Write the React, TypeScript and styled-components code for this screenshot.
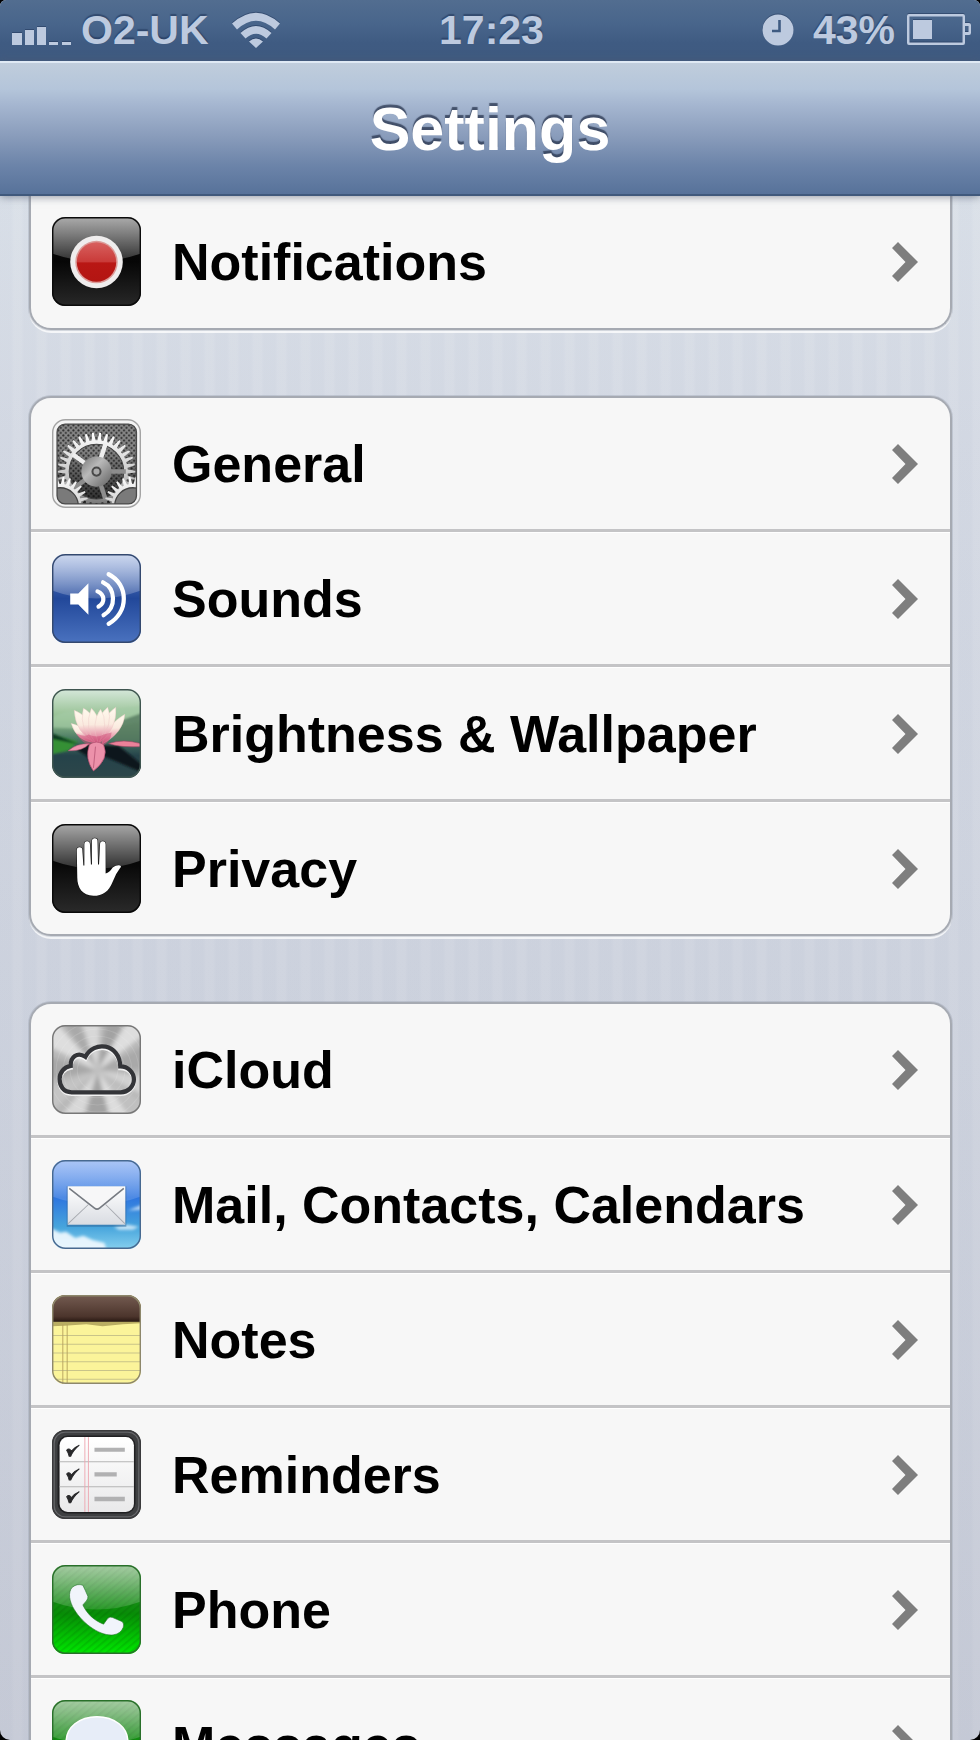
import React from "react";
import styled, { createGlobalStyle, css } from "styled-components";

const GlobalStyle = createGlobalStyle`
  *, *::before, *::after { box-sizing: border-box; }
  html, body { margin: 0; background: #000; }
  body { font-family: "Liberation Sans", Arial, sans-serif; font-weight: 700; }
`;

const Screen = styled.div`
  display: flex;
  flex-direction: column;
  height: 100vh;
  overflow: hidden;
  border-radius: 6px 6px 10px 10px;
  background:
    repeating-linear-gradient(90deg, rgba(120, 140, 175, 0.03) 0 11px, rgba(255, 255, 255, 0.02) 14px 21px, rgba(120, 140, 175, 0.03) 24px),
    linear-gradient(#dbe1e9 11%, #d5dae4 25%, #cfd4df 55%, #c7cbd7);
`;

const StatusBar = styled.header`
  display: grid;
  grid-template-columns: 1fr auto 1fr;
  align-items: center;
  flex: none;
  height: 61px;
  padding: 0 9px 2px 12px;
  color: #bdcadf;
  font-size: 41px;
  line-height: 46px;
  text-shadow: 0 -2px 1px rgba(30, 50, 85, 0.55);
  background: linear-gradient(#526d90, #48658b 40%, #3f5b82 70%, #3f5a80);
`;

const StatusSide = styled.div<{ $end?: boolean }>`
  display: flex;
  align-items: center;
  gap: ${(p) => (p.$end ? "12px" : "23px")};
  justify-content: ${(p) => (p.$end ? "flex-end" : "flex-start")};
`;

const Carrier = styled.span`
  display: flex;
  align-items: center;
  gap: 9px;
`;

const Charge = styled.span`
  display: flex;
  align-items: center;
  gap: 19px;
`;

const Glyph = styled.svg`
  display: block;
  flex: none;
  fill: #bdcadf;
  filter: drop-shadow(0 -1px 0 rgba(30, 50, 85, 0.5));
`;

const NavBar = styled.div`
  position: relative;
  z-index: 1;
  display: flex;
  align-items: center;
  justify-content: center;
  flex: none;
  height: 135px;
  border-top: 2px solid #dfe9f4;
  border-bottom: 2px solid #40597c;
  background: linear-gradient(#c0cddc, #b4c5da 20%, #a5b6d0 32%, #899cbb 56%, #6c84a9 78%, #57729a);
  box-shadow: 0 1px 8px rgba(80, 90, 110, 0.6);
`;

const Title = styled.h1`
  margin: 0;
  color: #fff;
  font-size: 61px;
  line-height: 68px;
  text-shadow: 0 -3px 1px rgba(45, 58, 82, 0.8);
`;

const List = styled.main`
  display: flex;
  flex: 1;
  flex-direction: column;
  gap: 66px;
  min-height: 0;
  overflow-y: auto;
  scrollbar-width: none;
  padding: 0 28px 0 29px;
`;

const Group = styled.ul<{ $continued?: boolean }>`
  flex: none;
  margin: 0;
  padding: 0;
  list-style: none;
  overflow: hidden;
  border: 2px solid #a6aab2;
  border-radius: 22px;
  background: #f7f7f7;
  box-shadow: 0 0 0 1px rgba(150, 158, 172, 0.35), 0 3px 0 rgba(255, 255, 255, 0.75);
  ${(p) =>
    p.$continued &&
    css`
      padding-bottom: 1px;
      border-top: 0;
      border-radius: 0 0 22px 22px;
    `}
`;

const Item = styled.li`
  &:not(:last-child) {
    border-bottom: 3px solid #c4c4c6;
  }
  & + & {
    border-top: 1px solid #fff;
  }
`;

const RowLink = styled.a`
  display: flex;
  align-items: center;
  gap: 31px;
  height: 131px;
  padding: 0 32px 0 21px;
  color: #000;
  font-size: 52px;
  line-height: 60px;
  text-decoration: none;
`;

const Label = styled.span`
  flex: 1;
  white-space: nowrap;
`;

const IconSvg = styled.svg`
  display: block;
  flex: none;
  width: 89px;
  height: 89px;
`;

const Arrow = styled.svg`
  display: block;
  flex: none;
`;

type FrameProps = { id: string; stroke?: string; gloss?: number; children: React.ReactNode };

function Frame({ id, stroke = "#333", gloss = 0.65, children }: FrameProps) {
  return (
    <IconSvg viewBox="0 0 88 88" aria-hidden="true">
      <defs>
        <clipPath id={`${id}-clip`}>
          <rect width="88" height="88" rx="13" />
        </clipPath>
        <linearGradient id={`${id}-gloss`} x2="0" y2="1">
          <stop offset="0" stopColor="#fff" stopOpacity={gloss} />
          <stop offset="1" stopColor="#fff" stopOpacity={gloss * 0.25} />
        </linearGradient>
      </defs>
      <g clipPath={`url(#${id}-clip)`}>{children}</g>
      <rect x=".7" y=".7" width="86.6" height="86.6" rx="12.5" fill="none" stroke={stroke} strokeWidth="1.4" />
    </IconSvg>
  );
}

const Gloss = ({ id }: { id: string }) => (
  <path d="M0 0H88V36Q66 44 44 44T0 36Z" fill={`url(#${id}-gloss)`} />
);

function gear(cx: number, cy: number, outer: number, inner: number, teeth: number) {
  const pts: string[] = [];
  const step = (Math.PI * 2) / teeth;
  for (let i = 0; i < teeth; i++) {
    const a = i * step;
    [
      [inner, -0.34],
      [outer, -0.12],
      [outer, 0.12],
      [inner, 0.34],
    ].forEach(([r, t]) => {
      pts.push(`${(cx + r * Math.cos(a + t * step)).toFixed(2)} ${(cy + r * Math.sin(a + t * step)).toFixed(2)}`);
    });
  }
  return `M${pts.join("L")}Z`;
}

const NotificationsIcon = () => (
  <Frame id="notif" stroke="#0b0b0b">
    <defs>
      <linearGradient id="notif-base" x2="0" y2="1">
        <stop offset="0" stopColor="#111" />
        <stop offset=".5" stopColor="#060606" />
        <stop offset="1" stopColor="#282828" />
      </linearGradient>
      <linearGradient id="notif-red" x2="0" y2="1">
        <stop offset="0" stopColor="#d8605e" />
        <stop offset=".5" stopColor="#c93a38" />
        <stop offset=".52" stopColor="#b91714" />
        <stop offset="1" stopColor="#b31512" />
      </linearGradient>
    </defs>
    <rect width="88" height="88" fill="url(#notif-base)" />
    <Gloss id="notif" />
    <circle cx="44" cy="44.5" r="26" fill="#efeded" />
    <circle cx="44" cy="44.5" r="21" fill="#dc9b98" />
    <circle cx="44" cy="44.5" r="19.5" fill="url(#notif-red)" />
  </Frame>
);

const GeneralIcon = () => (
  <Frame id="general" stroke="#a4a4a4">
    <defs>
      <pattern id="general-mesh" width="5" height="5" patternUnits="userSpaceOnUse">
        <rect width="5" height="5" fill="#858585" />
        <circle cx="1.2" cy="1.2" r="1" fill="#2c2c2c" />
        <circle cx="3.7" cy="3.7" r="1" fill="#2c2c2c" />
      </pattern>
      <linearGradient id="general-shade" x2="0" y2="1">
        <stop offset="0" stopColor="#000" stopOpacity="0" />
        <stop offset="1" stopColor="#000" stopOpacity=".75" />
      </linearGradient>
      <linearGradient id="general-metal" x2="0" y2="1">
        <stop offset="0" stopColor="#fff" />
        <stop offset=".55" stopColor="#c6c6c6" />
        <stop offset="1" stopColor="#666" />
      </linearGradient>
      <linearGradient id="general-hub" x2="1" y2="1">
        <stop offset="0" stopColor="#777" />
        <stop offset=".4" stopColor="#b9b9b9" />
        <stop offset="1" stopColor="#606060" />
      </linearGradient>
      <linearGradient id="general-small" x2="0" y2="1">
        <stop offset="0" stopColor="#fff" />
        <stop offset=".5" stopColor="#cfcfcf" />
      </linearGradient>
      <clipPath id="general-plate">
        <rect x="5" y="5" width="78.5" height="79" rx="8" />
      </clipPath>
    </defs>
    <rect width="88" height="88" fill="#f4f4f4" />
    <g clipPath="url(#general-plate)">
      <rect width="88" height="88" fill="url(#general-mesh)" />
      <rect y="30" width="88" height="58" fill="url(#general-shade)" />
      <path
        fillRule="evenodd"
        fill="url(#general-metal)"
        d={`${gear(44, 52, 38.5, 31, 34)}M17 52a27 27 0 1 0 54 0a27 27 0 1 0-54 0Z`}
      />
      <circle cx="44" cy="52" r="27" fill="none" stroke="#444" strokeWidth="1" />
      {[0, 72, 144, 216, 288].map((a) => (
        <path key={a} d="M56 49.8H73V54.2H56Z" fill={a > 180 ? "#eee" : "#8d8d8d"} transform={`rotate(${a} 44 52)`} />
      ))}
      <circle cx="44" cy="52" r="15" fill="url(#general-hub)" />
      <circle cx="44" cy="52" r="4" fill="#aaa" stroke="#494949" strokeWidth="2" />
      <path d={gear(8, 85, 28, 21, 26)} fill="url(#general-small)" />
      <path d={gear(80, 85, 28, 21, 26)} fill="url(#general-small)" />
      <circle cx="8" cy="86" r="18" fill="#7a7a7a" stroke="#444" strokeWidth="1.3" />
      <circle cx="80" cy="86" r="18" fill="#7a7a7a" stroke="#444" strokeWidth="1.3" />
    </g>
    <rect x="5" y="5" width="78.5" height="79" rx="8" fill="none" stroke="#4a4a4a" strokeWidth="1.3" />
  </Frame>
);

const SoundsIcon = () => (
  <Frame id="sounds" stroke="#34496f">
    <defs>
      <linearGradient id="sounds-base" x2="0" y2="1">
        <stop offset="0" stopColor="#6f8fd0" />
        <stop offset=".5" stopColor="#22489a" />
        <stop offset="1" stopColor="#4a72bf" />
      </linearGradient>
    </defs>
    <rect width="88" height="88" fill="url(#sounds-base)" />
    <Gloss id="sounds" />
    <path d="M18 39H26L36 29V60L26 50H18Z" fill="#fff" />
    <g fill="none" stroke="#fff" strokeWidth="4.2" strokeLinecap="round">
      <path d="M45 37C52 40 53 48 46 52" />
      <path d="M50.5 28C63 34 64 53 51 60.5" />
      <path d="M56 20C76 30 76 58 56 69" />
    </g>
  </Frame>
);

const WallpaperIcon = () => (
  <Frame id="wall" stroke="#3f5550">
    <defs>
      <linearGradient id="wall-base" x2="0" y2="1">
        <stop offset="0" stopColor="#d6e8db" />
        <stop offset=".35" stopColor="#8dbb88" />
        <stop offset=".55" stopColor="#4e7c66" />
        <stop offset=".75" stopColor="#25434a" />
        <stop offset="1" stopColor="#2d464a" />
      </linearGradient>
      <linearGradient id="wall-petal" x2="0" y2="1">
        <stop offset="0" stopColor="#fffbee" />
        <stop offset=".45" stopColor="#faeadf" />
        <stop offset=".75" stopColor="#e79aad" />
        <stop offset="1" stopColor="#c94c75" />
      </linearGradient>
      <filter id="wall-soft">
        <feGaussianBlur stdDeviation="1.2" />
      </filter>
    </defs>
    <rect width="88" height="88" fill="url(#wall-base)" />
    <g filter="url(#wall-soft)">
      <path d="M0 28Q18 18 40 22L88 17V32L50 40L0 38Z" fill="#a4cba5" opacity=".7" />
      <path d="M60 34L88 24V52H62Z" fill="#55795f" opacity=".8" />
      <path d="M-2 44L26 52L16 61L-2 65Z" fill="#349035" />
      <path d="M-2 43L28 55L-2 49Z" fill="#0e3a21" />
      <path d="M24 60L36 55L66 56L88 74V82L50 66L42 78L34 66Z" fill="#10191f" />
    </g>
    <path d="M16 61Q24 54 37 54Q30 62 16 61Z" fill="#ee94ad" stroke="#b75372" strokeWidth=".5" />
    <path d="M56 54Q70 49 88 54V57Q68 58 56 54Z" fill="#eb8199" stroke="#a34765" strokeWidth=".6" />
    <g fill="url(#wall-petal)" stroke="#ecc6c4" strokeWidth=".4">
      <path d="M19 34Q32 36 41 53Q24 51 19 34Z" />
      <path d="M72 25Q71 43 49 55Q53 36 72 25Z" />
      <path d="M22 21Q38 26 44 54Q23 44 22 21Z" />
      <path d="M63 18Q65 40 45 55Q46 30 63 18Z" />
      <path d="M31 19Q46 26 44 55Q26 42 31 19Z" />
      <path d="M55 18Q62 36 44 55Q39 32 55 18Z" />
      <path d="M39 19Q52 32 44 55Q31 39 39 19Z" />
      <path d="M48 20Q57 34 46 54Q38 34 48 20Z" />
    </g>
    <path d="M24 44Q33 48 36 45Q45 49 51 45L59 43Q57 56 46 57Q31 57 24 44Z" fill="#cf507a" opacity=".5" />
    <path d="M37 55Q44 50 51 55Q57 69 41 81Q32 69 37 55Z" fill="#ec91aa" stroke="#b64e70" strokeWidth=".7" />
    <path d="M43 57L41 78" stroke="#bd5c7b" strokeWidth=".9" />
  </Frame>
);

const PrivacyIcon = () => (
  <Frame id="privacy" stroke="#090909">
    <defs>
      <linearGradient id="privacy-base" x2="0" y2="1">
        <stop offset=".45" stopColor="#080808" />
        <stop offset="1" stopColor="#2a2a2a" />
      </linearGradient>
    </defs>
    <rect width="88" height="88" fill="url(#privacy-base)" />
    <Gloss id="privacy" />
    <path
      d="M24.5 26Q24.5 23 27.3 23T30 26L31 41H32V20Q32 17 34.7 17T37.5 20L38.5 40H39.5V17Q39.5 14 42.3 14T45 17L45.5 40H46.5L47.5 20Q47.5 17 50.2 17T53 20V49Q57 48 60 43Q64 40 67.5 41Q69 42 67 44Q63 49 60 57C56 67 50 71 41 71C30 71 25 63 25 53Z"
      fill="#fff"
      stroke="#111"
      strokeWidth="1"
      paintOrder="stroke"
    />
  </Frame>
);

const CloudIcon = () => (
  <Frame id="cloud" stroke="#777">
    <defs>
      <filter id="cloud-soft" x="-20%" y="-20%" width="140%" height="140%">
        <feGaussianBlur stdDeviation="2" />
      </filter>
    </defs>
    <rect width="88" height="88" fill="#b8b8b8" />
    <g filter="url(#cloud-soft)">
      {(
        [
          [-100, 24, "#e5e5e5"],
          [-70, 18, "#999999"],
          [-48, 20, "#eeeeee"],
          [-15, 25, "#a3a3a3"],
          [18, 20, "#dddddd"],
          [45, 18, "#c3c3c3"],
          [65, 18, "#ededed"],
          [90, 26, "#9a9a9a"],
          [118, 20, "#e5e5e5"],
          [150, 22, "#c9c9c9"],
          [183, 24, "#a0a0a0"],
          [218, 22, "#eeeeee"],
          [243, 16, "#a2a2a2"],
        ] as [number, number, string][]
      ).map(([a, w, c]) => (
        <path key={a} d={`M0 0L75 ${-w * 0.7}V${w * 0.7}Z`} fill={c} opacity=".7" transform={`translate(45 45) rotate(${a})`} />
      ))}
    </g>
    {[20, 27, 34, 41, 48].map((r) => (
      <circle key={r} cx="45" cy="45" r={r} fill="none" stroke="#fff" strokeWidth="1" opacity=".12" />
    ))}
    {[
      { y: 1.6, color: "#f2f2f2" },
      { y: 0, color: "#333438" },
    ].map(({ y, color }) => (
      <path
        key={y}
        d="M19.5 66.5C11 66.5 7.500 60 7.500 53.5C7.500 47 12 41.5 18.5 40.5C18 32 25 26 33 31.5C41 15 67 18 67.5 41C75 41 81 46.5 81 54C81 61 75 66.5 68 66.5Z"
        fill="none"
        stroke={color}
        strokeWidth="4.2"
        transform={`translate(0 ${y})`}
      />
    ))}
  </Frame>
);

const MailIcon = () => (
  <Frame id="mail" stroke="#476990" gloss={0.42}>
    <defs>
      <linearGradient id="mail-sky" x2="0" y2="1">
        <stop offset="0" stopColor="#6f9df0" />
        <stop offset=".42" stopColor="#2e75df" />
        <stop offset=".75" stopColor="#46a4dc" />
        <stop offset="1" stopColor="#85cfee" />
      </linearGradient>
      <linearGradient id="mail-paper" x2="0" y2="1">
        <stop offset="0" stopColor="#fff" />
        <stop offset="1" stopColor="#d9dce2" />
      </linearGradient>
      <filter id="mail-soft">
        <feGaussianBlur stdDeviation="1.5" />
      </filter>
    </defs>
    <rect width="88" height="88" fill="url(#mail-sky)" />
    <g fill="#f2faff" filter="url(#mail-soft)">
      <path d="M-2 67L8 72L14 71L23 77L31 75L40 79L52 82L54 90H-2Z" opacity=".9" />
      <path d="M61 66L75 64L86 66L80 69L66 69ZM75 50L90 44V49Z" opacity=".75" />
    </g>
    <Gloss id="mail" />
    <rect x="14.5" y="26" width="59" height="40" fill="#27598a" opacity=".45" />
    <rect x="15.5" y="26" width="57" height="38" fill="url(#mail-paper)" />
    <path d="M16 63L36 44M72 63L53 44" stroke="#a8abb1" strokeWidth="1" />
    <path d="M16 27H72L47 47.5Q44.5 49.5 42 47.5Z" fill="#f7f7f8" />
    <path d="M17 28L42 47.5Q44.5 49.5 47 47.5L71 28" fill="none" stroke="#777b82" strokeWidth="1.6" />
  </Frame>
);

const NotesIcon = () => (
  <Frame id="notes" stroke="#8d876b">
    <defs>
      <linearGradient id="notes-leather" x2="0" y2="1">
        <stop offset="0" stopColor="#745b51" />
        <stop offset=".8" stopColor="#4c352c" />
        <stop offset="1" stopColor="#281812" />
      </linearGradient>
    </defs>
    <rect width="88" height="88" fill="#fbf49a" />
    <path d="M0 26H88V28L70 29L50 31L34 29L12 30.5L0 31Z" fill="#b9ad62" />
    <rect width="88" height="26.5" fill="url(#notes-leather)" />
    <path d="M0 40H88M0 48.7H88M0 57.3H88M0 66H88M0 74.7H88M0 83.3H88" stroke="#c9c489" strokeWidth="1" />
    <path d="M10.7 29V88M15 29V88" stroke="#b5a05b" strokeWidth=".9" />
  </Frame>
);

const RemindersIcon = () => (
  <Frame id="remind" stroke="#3a3a3c">
    <defs>
      <linearGradient id="remind-paper" x2="0" y2="1">
        <stop offset="0" stopColor="#fff" />
        <stop offset="1" stopColor="#e9e9ea" />
      </linearGradient>
    </defs>
    <rect width="88" height="88" fill="#3e3f41" />
    <rect x="2" y="2" width="84" height="84" rx="11" fill="none" stroke="#66676a" strokeWidth="1.5" />
    <rect x="5.5" y="5.5" width="77" height="77" rx="10" fill="#202022" />
    <rect x="7.5" y="7" width="73.5" height="74" rx="8" fill="url(#remind-paper)" />
    <path d="M7.5 31.5H81M7.5 56H81" stroke="#b5b5b5" strokeWidth="1" />
    <path d="M32.5 7V81M36 7V81" stroke="#eda5b0" strokeWidth=".9" />
    <path d="M42 17.5H72V21.5H42ZM42 41.7H64V46H42ZM42 66H72V70.5H42Z" fill="#b1b1b2" />
    {[0, 23.5, 46].map((y) => (
      <path
        key={y}
        d="M14.5 20Q17 17 19 21Q22 17 27 15Q21 20 18.5 26H17Q16 22 14.5 20Z"
        fill="#29292b"
        stroke="#29292b"
        strokeWidth="1"
        transform={`translate(0 ${y})`}
      />
    ))}
  </Frame>
);

const GreenBase = ({ id }: { id: string }) => (
  <>
    <defs>
      <linearGradient id={`${id}-base`} x2="0" y2="1">
        <stop offset="0" stopColor="#4d9a48" />
        <stop offset=".3" stopColor="#218d20" />
        <stop offset=".55" stopColor="#078d06" />
        <stop offset="1" stopColor="#00e800" />
      </linearGradient>
      <pattern id={`${id}-lines`} width="5" height="5" patternUnits="userSpaceOnUse" patternTransform="rotate(-40)">
        <rect width="5" height="2" fill="#003c00" opacity=".12" />
      </pattern>
    </defs>
    <rect width="88" height="88" fill={`url(#${id}-base)`} />
    <rect width="88" height="88" fill={`url(#${id}-lines)`} />
    <Gloss id={id} />
  </>
);

const PhoneIcon = () => (
  <Frame id="phone" stroke="#29702a" gloss={0.5}>
    <GreenBase id="phone" />
    <path
      d="M20 22Q25 18 30.5 20Q33 25 35.5 31Q36 33 34 35.5L30.5 39.5C35 49 42 55 51 58.5L55 53Q57 50.5 60 52L69.5 56Q71.5 58 70.5 61.5Q68 68 61 69C49 71 31 59 22 44C17 36 15.5 27 20 22Z"
      fill="#f1f4fb"
      stroke="#26752a"
      strokeWidth=".6"
    />
  </Frame>
);

const MessagesIcon = () => (
  <Frame id="msg" stroke="#29702a" gloss={0.5}>
    <GreenBase id="msg" />
    <path
      d="M44.5 16.5C62 16.5 75 27 75 41S62 65 44.5 65Q40 65 35 64Q29 70 21 71Q26 66 26 61Q14 54 14 41C14 27 27 16.5 44.5 16.5Z"
      fill="#e7edf8"
      stroke="#fff"
      strokeWidth="1.5"
    />
  </Frame>
);

type Entry = { label: string; Icon: () => React.ReactElement };

const groups: Entry[][] = [
  [{ label: "Notifications", Icon: NotificationsIcon }],
  [
    { label: "General", Icon: GeneralIcon },
    { label: "Sounds", Icon: SoundsIcon },
    { label: "Brightness & Wallpaper", Icon: WallpaperIcon },
    { label: "Privacy", Icon: PrivacyIcon },
  ],
  [
    { label: "iCloud", Icon: CloudIcon },
    { label: "Mail, Contacts, Calendars", Icon: MailIcon },
    { label: "Notes", Icon: NotesIcon },
    { label: "Reminders", Icon: RemindersIcon },
    { label: "Phone", Icon: PhoneIcon },
    { label: "Messages", Icon: MessagesIcon },
  ],
];

function Row({ label, Icon }: Entry) {
  return (
    <Item>
      <RowLink href={`#${label.toLowerCase().replace(/[^a-z]+/g, "-")}`}>
        <Icon />
        <Label>{label}</Label>
        <Arrow width="26" height="40" viewBox="0 0 26 40" aria-hidden="true">
          <path d="M0 6L6 0L26 20L6 40L0 34L13.5 20Z" fill="#7e7e7e" />
        </Arrow>
      </RowLink>
    </Item>
  );
}

export default function App() {
  return (
    <>
      <GlobalStyle />
      <Screen>
        <StatusBar>
          <StatusSide>
            <Carrier>
              <Glyph width="60" height="32" viewBox="0 0 60 32" aria-label="Signal strength">
                <path d="M0 19H10V31H0ZM13 16H22V31H13ZM25 13H34V31H25ZM37 28H46V31H37ZM50 28H59V31H50Z" />
              </Glyph>
              <span>O2-UK</span>
            </Carrier>
            <Glyph width="48" height="36" viewBox="0 0 48 36" aria-label="Wi-Fi">
              <path d="M0 11.5Q24-10 48 11.5L43 17.5Q24 0 5 17.5ZM8.5 21Q24 7 39.5 21L34.5 26.5Q24 17 13.5 26.5ZM17 29.5Q24 23.5 31 29.5L24 36Z" />
            </Glyph>
          </StatusSide>
          <span>17:23</span>
          <StatusSide $end>
            <Charge>
              <Glyph width="32" height="32" viewBox="0 0 32 32" aria-label="Alarm set">
                <circle cx="16" cy="16" r="15.5" />
                <path d="M17.5 6V17H10" fill="none" stroke="#3f5b82" strokeWidth="2.6" />
              </Glyph>
              <span>43%</span>
            </Charge>
            <Glyph width="64" height="32" viewBox="0 0 64 32" aria-label="Battery">
              <path
                fillRule="evenodd"
                d="M2 0H56Q58 0 58 2V9H62Q64 9 64 11V19Q64 21 62 21H58V29Q58 31 56 31H2Q0 31 0 29V2Q0 0 2 0ZM2.5 2.5V28.5H55.5V2.5ZM58 12V18H61.5V12ZM6 6H25V25H6Z"
              />
            </Glyph>
          </StatusSide>
        </StatusBar>
        <NavBar>
          <Title>Settings</Title>
        </NavBar>
        <List>
          {groups.map((entries, i) => (
            <Group key={entries[0].label} $continued={i === 0}>
              {entries.map((entry) => (
                <Row key={entry.label} {...entry} />
              ))}
            </Group>
          ))}
        </List>
      </Screen>
    </>
  );
}
